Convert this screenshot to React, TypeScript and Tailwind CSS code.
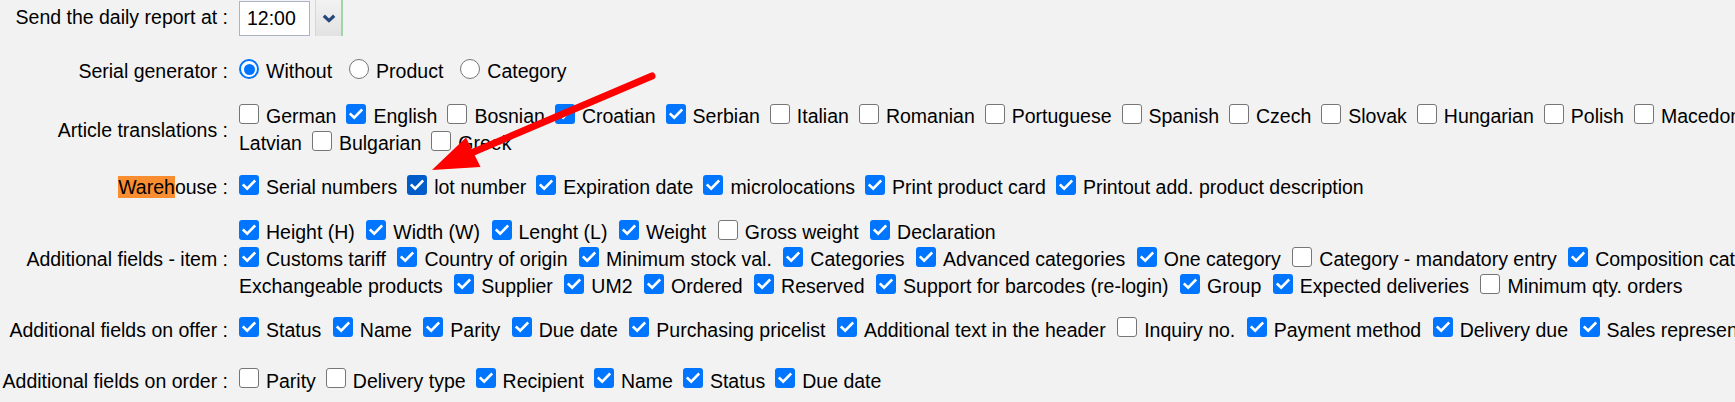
import React from 'react';

type Tok = { box?: boolean; on?: boolean; dark?: boolean; text?: string };

const B = (on: boolean, dark = false): Tok => ({ box: true, on, dark });
const T = (text: string): Tok => ({ text });

const CheckBox = ({ on, dark }: { on?: boolean; dark?: boolean }) =>
  on ? (
    <span
      className={`mb-[6px] flex h-[20px] w-[20px] shrink-0 items-center justify-center rounded-[3px] ${
        dark ? 'bg-[#005cc8]' : 'bg-[#0075ff]'
      }`}
    >
      <svg width="14" height="12" viewBox="0 0 14 12">
        <path d="M1.8 6.4l3.4 3.3L12.3 2.4" fill="none" stroke="#fff" strokeWidth="2.7" strokeLinecap="square" />
      </svg>
    </span>
  ) : (
    <span className="mb-[6px] h-[20px] w-[20px] shrink-0 rounded-[3px] border-[1.5px] border-[#767676] bg-white" />
  );

const Radio = ({ on, label }: { on?: boolean; label: string }) => (
  <span className="flex items-center">
    {on ? (
      <span className="mb-[5px] flex h-[20px] w-[20px] items-center justify-center rounded-full border-[2px] border-[#0075ff] bg-white">
        <span className="h-[11px] w-[11px] rounded-full bg-[#0075ff]" />
      </span>
    ) : (
      <span className="mb-[5px] h-[20px] w-[20px] rounded-full border-[1.5px] border-[#767676] bg-white" />
    )}
    <span className="ml-[7px]">{label}</span>
  </span>
);

// wide: slightly larger gap before each checkbox
const Line = ({ toks, wide }: { toks: Tok[]; wide?: boolean }) => (
  <div className="flex h-[27px] items-center whitespace-nowrap">
    {toks.map((t, i) =>
      t.box ? (
        <span key={i} className={i === 0 ? 'flex' : wide ? 'ml-[11.5px] flex' : 'ml-[10px] flex'}>
          <CheckBox on={t.on} dark={t.dark} />
        </span>
      ) : (
        <span key={i} className={i === 0 ? '' : 'ml-[7px]'}>
          {t.text}
        </span>
      )
    )}
  </div>
);

const items = (list: [string, boolean, boolean?][]): Tok[] =>
  list.flatMap(([s, on, dark]) => [B(on, !!dark), T(s)]);

const Row = ({ label, className, children }: { label: React.ReactNode; className?: string; children: React.ReactNode }) => (
  <div className={`flex items-center ${className || ''}`}>
    <div className="w-[228px] shrink-0 text-right whitespace-nowrap">{label}</div>
    <div className="pl-[11px]">{children}</div>
  </div>
);

export default function App() {
  return (
    <div className="relative h-[402px] w-[1735px] overflow-hidden bg-[#f2f2f2] font-['Liberation_Sans',Arial,sans-serif] text-[19.5px] text-black">
      <Row label="Send the daily report at :" className="h-[36px]">
        <div className="flex items-center">
          <div className="mt-[1px] flex h-[35px] w-[71px] items-center border border-[#abb4c4] bg-white pl-[7px]">12:00</div>
          <div className="ml-[5px] flex h-[36px] w-[28px] items-center justify-center border-l border-[#d6d6d6] border-r-2 border-r-[#9fd6a8] bg-gradient-to-b from-[#f2f2f2] to-[#e2e2e2]">
            <svg width="14" height="9" viewBox="0 0 14 9">
              <path d="M1.8 1.8L7 6.6l5.2-4.8" fill="none" stroke="#26467e" strokeWidth="3.2" />
            </svg>
          </div>
        </div>
      </Row>

      <Row label="Serial generator :" className="mt-[21px]">
        <div className="flex h-[27px] items-center gap-[17px] whitespace-nowrap">
          <Radio on label="Without" />
          <Radio label="Product" />
          <Radio label="Category" />
        </div>
      </Row>

      <Row label="Article translations :" className="mt-[17px]">
        <Line
          toks={[
            ...items([
              ['German', false],
              ['English', true],
              ['Bosnian', false],
              ['Croatian', true],
              ['Serbian', true],
              ['Italian', false],
              ['Romanian', false],
              ['Portuguese', false],
              ['Spanish', false],
              ['Czech', false],
              ['Slovak', false],
              ['Hungarian', false],
              ['Polish', false],
              ['Macedonian', false],
            ]),
            B(false),
          ]}
        />
        <Line toks={[T('Latvian'), ...items([['Bulgarian', false], ['Greek', false]])]} />
      </Row>

      <Row
        label={
          <>
            <span className="bg-[#f98d30]">Wareh</span>ouse :
          </>
        }
        className="mt-[16px]"
      >
        <Line
          toks={items([
            ['Serial numbers', true],
            ['lot number', true, true],
            ['Expiration date', true],
            ['microlocations', true],
            ['Print product card', true],
            ['Printout add. product description', true],
          ])}
        />
      </Row>

      <Row label="Additional fields - item :" className="mt-[17px]">
        <Line
          wide
          toks={items([
            ['Height (H)', true],
            ['Width (W)', true],
            ['Lenght (L)', true],
            ['Weight', true],
            ['Gross weight', false],
            ['Declaration', true],
          ])}
        />
        <Line
          wide
          toks={[
            ...items([
              ['Customs tariff', true],
              ['Country of origin', true],
              ['Minimum stock val.', true],
              ['Categories', true],
              ['Advanced categories', true],
              ['One category', true],
              ['Category - mandatory entry', false],
              ['Composition categories', true],
            ]),
            B(true),
          ]}
        />
        <Line
          wide
          toks={[
            T('Exchangeable products'),
            ...items([
              ['Supplier', true],
              ['UM2', true],
              ['Ordered', true],
              ['Reserved', true],
              ['Support for barcodes (re-login)', true],
              ['Group', true],
              ['Expected deliveries', true],
              ['Minimum qty. orders', false],
            ]),
          ]}
        />
      </Row>

      <Row label="Additional fields on offer :" className="mt-[15px]">
        <Line
          wide
          toks={items([
            ['Status', true],
            ['Name', true],
            ['Parity', true],
            ['Due date', true],
            ['Purchasing pricelist', true],
            ['Additional text in the header', true],
            ['Inquiry no.', false],
            ['Payment method', true],
            ['Delivery due', true],
            ['Sales representative', true],
          ])}
        />
      </Row>

      <Row label="Additional fields on order :" className="mt-[22px]">
        <Line
          toks={items([
            ['Parity', false],
            ['Delivery type', false],
            ['Recipient', true],
            ['Name', true],
            ['Status', true],
            ['Due date', true],
          ])}
        />
      </Row>

      {/* red annotation arrow */}
      <svg className="pointer-events-none absolute left-0 top-0" width="1735" height="402">
        <line x1="652" y1="76" x2="470" y2="153.5" stroke="#ff0000" strokeWidth="7" strokeLinecap="round" />
        <polygon points="432,170 466,137.5 480.5,167" fill="#ff0000" />
      </svg>
    </div>
  );
}
